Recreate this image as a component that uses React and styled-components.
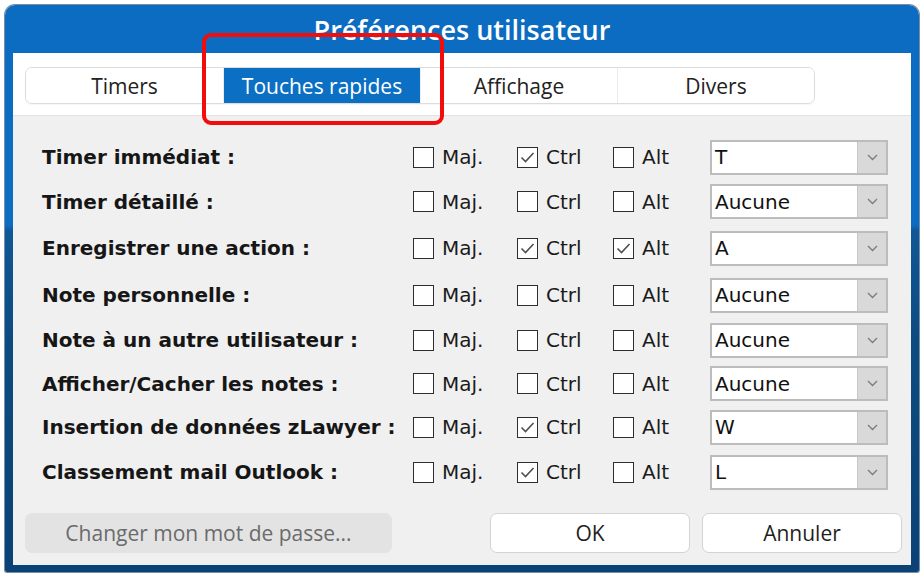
import React from "react";
import styled, { createGlobalStyle } from "styled-components";

const GlobalStyle = createGlobalStyle`
  html, body {
    margin: 0;
    padding: 0;
    background: #ffffff;
  }
  #root {
    width: 924px;
    height: 577px;
    overflow: hidden;
  }
`;

const Window = styled.div`
  position: relative;
  box-sizing: border-box;
  width: 914px;
  height: 567px;
  margin: 5px 0 0 5px;
  padding: 0 8px 7px;
  border-radius: 10px 10px 2px 2px;
  background: linear-gradient(
    180deg,
    #0b6cc1 0,
    #0b6cc1 220px,
    #0f5796 226px,
    #0c4b80 60%,
    #0a4275 100%
  );
  box-shadow: 0 0 0 1px rgba(8, 50, 90, 0.55);
  display: flex;
  flex-direction: column;
`;

const TitleBar = styled.div`
  height: 48px;
  display: flex;
  align-items: center;
  justify-content: center;
  color: #ffffff;
  font-family: "Open Sans", sans-serif;
  font-weight: 600;
  font-size: 27px;
`;

const Body = styled.div`
  flex: 1;
  background: #f0f0f0;
  display: flex;
  flex-direction: column;
`;

const TabStrip = styled.div`
  background: #ffffff;
  padding: 14px 12px 11px;
  border-bottom: 1px solid #e2e2e2;
`;

const TabGroup = styled.div`
  box-sizing: border-box;
  width: 790px;
  height: 37px;
  display: grid;
  grid-template-columns: repeat(4, 1fr);
  border: 1px solid #dcdcdc;
  border-radius: 7px;
  overflow: hidden;
  box-shadow: 0 1px 1px rgba(0, 0, 0, 0.04);
`;

const Tab = styled.div`
  display: flex;
  align-items: center;
  justify-content: center;
  font-family: "Open Sans", sans-serif;
  font-size: 21px;
  color: ${(p) => (p.$active ? "#ffffff" : "#222222")};
  background: ${(p) => (p.$active ? "#0b6fc4" : "#ffffff")};

  & + & {
    border-left: 1px solid #ececec;
  }
`;

const Form = styled.div`
  padding: 19px 0 0 29px;
  display: grid;
  grid-template-columns: 371px 104px 96px 97px 178px;
  grid-template-rows: 44px 45px 48px 46px 44px 43px 44px 46px;
  align-items: center;
  font-family: "DejaVu Sans", Verdana, sans-serif;
  font-size: 20px;
  color: #1b1b1b;
`;

const Label = styled.div`
  font-weight: 700;
  white-space: nowrap;
  color: #161616;
`;

const Check = styled.label`
  display: flex;
  align-items: center;
  gap: 8px;
  white-space: nowrap;
`;

const Box = styled.span`
  box-sizing: border-box;
  width: 21px;
  height: 21px;
  border: 1px solid #2e2e2e;
  background: #ffffff;
  display: flex;
  align-items: center;
  justify-content: center;
`;

const Select = styled.div`
  box-sizing: border-box;
  height: 35px;
  display: flex;
  border: 2px solid #bcbcbc;
  background: #ffffff;
`;

const SelectValue = styled.div`
  flex: 1;
  display: flex;
  align-items: center;
  padding-left: 3px;
  color: #111111;
`;

const SelectArrow = styled.div`
  width: 28px;
  background: #d9d9d9;
  border-left: 1px solid #c6c6c6;
  display: flex;
  align-items: center;
  justify-content: center;
`;

const Footer = styled.div`
  padding: 18px 9px 0 12px;
  display: flex;
  justify-content: space-between;
`;

const ButtonGroup = styled.div`
  display: flex;
  gap: 12px;
`;

const Button = styled.button`
  box-sizing: border-box;
  height: 40px;
  width: ${(p) => (p.$wide ? "367px" : "200px")};
  border-radius: 7px;
  border: 1px solid ${(p) => (p.$disabled ? "#e3e3e3" : "#d4d4d4")};
  background: ${(p) => (p.$disabled ? "#e3e3e3" : "#ffffff")};
  color: ${(p) => (p.$disabled ? "#6b6b6b" : "#1f1f1f")};
  font-family: "Open Sans", sans-serif;
  font-size: 21px;
  padding: 0;
`;

const Highlight = styled.div`
  position: absolute;
  left: 197px;
  top: 28px;
  width: 242px;
  height: 92px;
  box-sizing: border-box;
  border: 4px solid #f20c0c;
  border-radius: 9px;
  pointer-events: none;
`;

const rows = [
  { label: "Timer immédiat :", maj: false, ctrl: true, alt: false, key: "T" },
  { label: "Timer détaillé :", maj: false, ctrl: false, alt: false, key: "Aucune" },
  { label: "Enregistrer une action :", maj: false, ctrl: true, alt: true, key: "A" },
  { label: "Note personnelle :", maj: false, ctrl: false, alt: false, key: "Aucune" },
  { label: "Note à un autre utilisateur :", maj: false, ctrl: false, alt: false, key: "Aucune" },
  { label: "Afficher/Cacher les notes :", maj: false, ctrl: false, alt: false, key: "Aucune" },
  { label: "Insertion de données zLawyer :", maj: false, ctrl: true, alt: false, key: "W" },
  { label: "Classement mail Outlook :", maj: false, ctrl: true, alt: false, key: "L" },
];

function Checkbox({ checked, children }) {
  return (
    <Check>
      <Box>
        {checked && (
          <svg width="15" height="13" viewBox="0 0 15 13">
            <polyline
              points="1.5,6.5 5.5,10.5 13.5,2"
              fill="none"
              stroke="#4f4f4f"
              strokeWidth="1.6"
            />
          </svg>
        )}
      </Box>
      {children}
    </Check>
  );
}

function Dropdown({ value }) {
  return (
    <Select>
      <SelectValue>{value}</SelectValue>
      <SelectArrow>
        <svg width="11" height="7" viewBox="0 0 11 7">
          <polyline
            points="1,1 5.5,5.5 10,1"
            fill="none"
            stroke="#7a7a7a"
            strokeWidth="1.3"
          />
        </svg>
      </SelectArrow>
    </Select>
  );
}

export default function App() {
  return (
    <>
      <GlobalStyle />
      <Window>
        <TitleBar>Préférences utilisateur</TitleBar>
        <Body>
          <TabStrip>
            <TabGroup>
              <Tab>Timers</Tab>
              <Tab $active>Touches rapides</Tab>
              <Tab>Affichage</Tab>
              <Tab>Divers</Tab>
            </TabGroup>
          </TabStrip>
          <Form>
            {rows.map((r) => (
              <React.Fragment key={r.label}>
                <Label>{r.label}</Label>
                <Checkbox checked={r.maj}>Maj.</Checkbox>
                <Checkbox checked={r.ctrl}>Ctrl</Checkbox>
                <Checkbox checked={r.alt}>Alt</Checkbox>
                <Dropdown value={r.key} />
              </React.Fragment>
            ))}
          </Form>
          <Footer>
            <Button $wide $disabled>
              Changer mon mot de passe...
            </Button>
            <ButtonGroup>
              <Button>OK</Button>
              <Button>Annuler</Button>
            </ButtonGroup>
          </Footer>
        </Body>
        <Highlight />
      </Window>
    </>
  );
}
